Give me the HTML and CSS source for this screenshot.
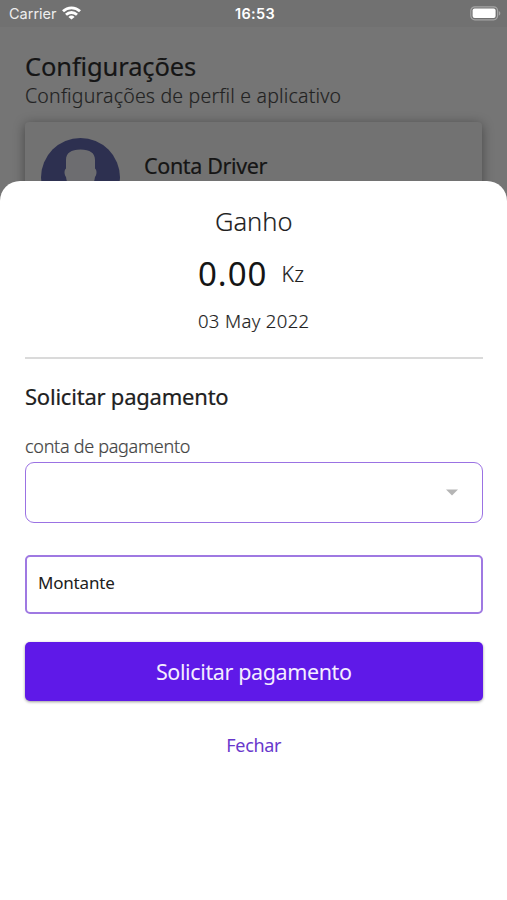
FILE: index.html
```html
<!DOCTYPE html>
<html lang="pt">
<head>
<meta charset="utf-8">
<title>Configurações</title>
<link rel="stylesheet" href="styles.css">
</head>
<body>
<main class="screen">
  <header class="status">
    <span class="carrier">Carrier
      <svg class="wifi" width="19" height="14" viewBox="0 0 19 14" fill="none" stroke="#fff" stroke-width="2.8"><path d="M1 5.200a12.300 12.300 0 0 1 17 0M4 8.700a8 8 0 0 1 11 0"/><path d="M9.500 13.600 6.400 10.900a4.500 4.500 0 0 1 6.200 0z" fill="#fff" stroke="none"/></svg>
    </span>
    <span class="clock">16:53</span>
    <svg class="battery" width="31" height="15" viewBox="0 0 31 15"><rect x=".8" y=".8" width="26.800" height="13" rx="4" fill="none" stroke="#a5a5a5" stroke-width="1.200"/><rect x="2.600" y="2.600" width="23" height="9.400" rx="2" fill="#fff"/><path d="M28.800 5c2 .8 2 3.800 0 4.600z" fill="#a5a5a5"/></svg>
  </header>
  <section class="settings">
    <h1 class="title">Configurações</h1>
    <p class="subtitle">Configurações de perfil e aplicativo</p>
    <div class="card">
      <svg class="avatar" width="79" height="79" viewBox="0 0 79 79"><circle cx="39.500" cy="39.500" r="39.500" fill="#2d3050"/><path d="M25 22c0-7 5-10.500 14.500-10.500S54 15 54 22v8.500c2 1.500 2 6 0 8.500-1 9-7 14-14.500 14S26 48 25 39c-2-2.500-2-7 0-8.500z" fill="#6d6d70"/></svg>
      <h2 class="name">Conta Driver</h2>
    </div>
  </section>
  <section class="sheet">
    <h2 class="earnings">Ganho</h2>
    <div class="amount"><span class="value">0.00</span><span class="currency">Kz</span></div>
    <p class="date">03 May 2022</p>
    <hr class="rule">
    <h3 class="heading">Solicitar pagamento</h3>
    <p class="label">conta de pagamento</p>
    <div class="select"><svg width="12" height="7" viewBox="0 0 12 7"><path d="M0 .5h12L6 6.500z" fill="#b5b5b5"/></svg></div>
    <div class="input"><span class="placeholder">Montante</span></div>
    <div class="button"><span class="button-text">Solicitar pagamento</span></div>
    <div class="close"><span class="close-text">Fechar</span></div>
  </section>
</main>
</body>
</html>
```
FILE: styles.css
```css
* { box-sizing: border-box; margin: 0; padding: 0; }
body { background: #fff; font-family: "Noto Sans", sans-serif; color: #202020; }
h1, h2, h3, p { font-weight: 400; white-space: nowrap; }
svg { display: block; flex: none; }
.screen { height: 900px; overflow: hidden; display: flex; flex-direction: column; background: #757575; }
.status { height: 27px; flex: none; display: grid; grid-template-columns: 1fr auto 1fr; align-items: center; padding: 0 6px 0 9px; background: #717171; color: #fff; font-family: Inter, sans-serif; }
.carrier { display: flex; align-items: center; gap: 5px; font-size: 14.500px; color: #eee; }
.wifi { margin-top: -1px; }
.clock { font-size: 14.500px; font-weight: 600; letter-spacing: .3px; }
.battery { justify-self: end; }
.settings { height: 154px; flex: none; padding: 22px 25px 0; color: #151515; }
.title { font-size: 25.500px; line-height: 35px; letter-spacing: -.12px; -webkit-text-stroke: .2px; }
.subtitle { font-size: 19.500px; line-height: 24px; font-weight: 300; letter-spacing: .2px; color: #222; -webkit-text-stroke: .15px; }
.card { height: 200px; margin-top: 14px; padding: 16px 16px; display: flex; gap: 24px; border-radius: 4px; background: #727272; box-shadow: 0 2px 12px rgba(0,0,0,.4); }
.name { font-size: 21.500px; line-height: 30px; margin-top: 13px; letter-spacing: -.35px; -webkit-text-stroke: .2px; }
.sheet { flex: 1; padding: 21px 24.500px 0 25px; border-radius: 20px 20px 0 0; background: #fff; display: flex; flex-direction: column; }
.earnings { height: 38px; line-height: 38px; text-align: center; font-size: 25.500px; font-weight: 300; -webkit-text-stroke: .15px; }
.amount { height: 60px; display: flex; justify-content: center; align-items: center; gap: 14px; padding-right: 5px; padding-top: 4px; }
.value { font-size: 33px; letter-spacing: 1px; color: #151515; line-height: 56px; margin-top: 4px; }
.currency { font-size: 21px; font-weight: 300; letter-spacing: .5px; line-height: 40px; margin-top: 4px; -webkit-text-stroke: .15px; }
.date { height: 38px; line-height: 42px; text-align: center; font-size: 18.500px; font-weight: 300; letter-spacing: .35px; color: #222; -webkit-text-stroke: .15px; }
.rule { height: 2px; margin-top: 19px; border: 0; background: #dadada; }
.heading { margin-top: 21px; height: 32px; line-height: 32px; font-size: 22px; letter-spacing: -.22px; -webkit-text-stroke: .2px; }
.label { margin-top: 21px; height: 30px; line-height: 26px; font-size: 18px; font-weight: 300; letter-spacing: -.28px; color: #444; -webkit-text-stroke: .2px; }
.select { height: 61px; margin-top: -1px; border: 1.500px solid #9b72e3; border-radius: 9px; display: flex; justify-content: flex-end; align-items: center; padding-right: 24px; }
.input { height: 59px; margin-top: 32px; border: 2px solid #9f79e2; border-radius: 5px; display: flex; align-items: center; padding: 0 0 4px 11px; font-size: 17px; letter-spacing: -.2px; }
.button { height: 59px; margin-top: 28px; border-radius: 5px; background: #5f19e8; color: #f4edff; display: flex; align-items: center; justify-content: center; padding-bottom: 1px; font-size: 21.500px; letter-spacing: -.38px; box-shadow: 0 1px 3px rgba(0,0,0,.4); }
.close { margin-top: 29px; height: 30px; line-height: 30px; text-align: center; font-size: 18px; letter-spacing: -.3px; color: #6838cc; }
```
